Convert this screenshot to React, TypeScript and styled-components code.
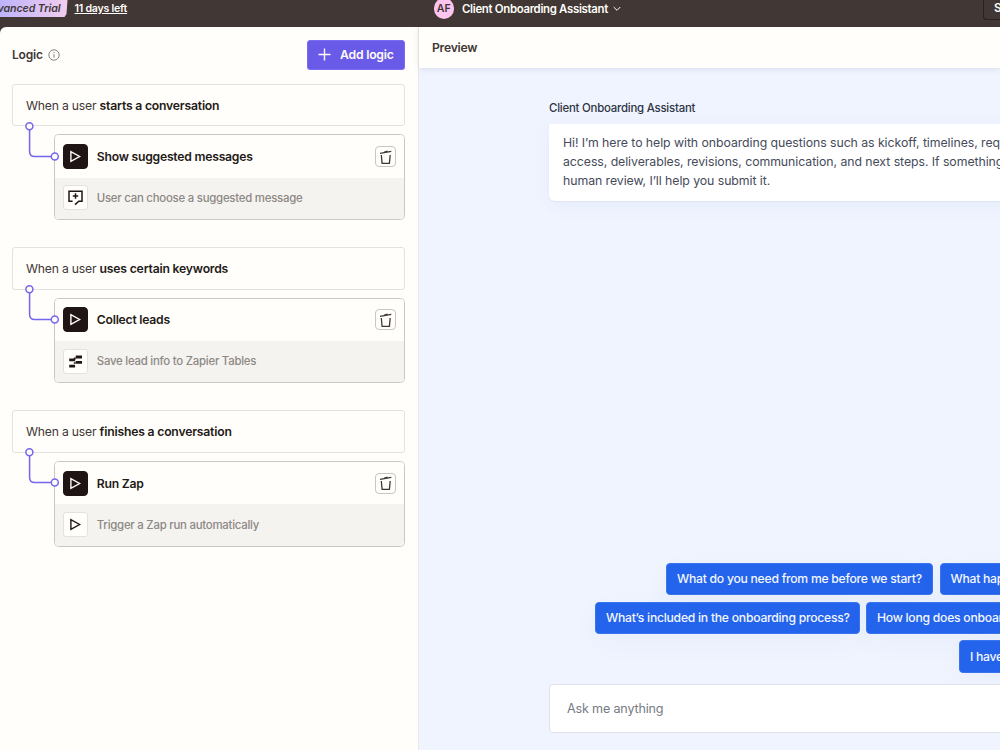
import React from "react";
import styled, { createGlobalStyle } from "styled-components";

const Global = createGlobalStyle`
  * { box-sizing: border-box; }
  html, body, #root { height: 100%; }
  body { margin: 0; overflow: hidden; background: #413735; font-family: Inter, sans-serif; color: #413735; }
  button { font-family: inherit; }
`;

const Page = styled.div`
  width: 1000px;
  height: 750px;
  display: flex;
  flex-direction: column;
  overflow: hidden;
`;

const TopBar = styled.header`
  height: 27px;
  flex: none;
  display: flex;
  align-items: flex-start;
  justify-content: space-between;
  background: #413735;
  color: #fffdf9;
  overflow: hidden;
`;

const TrialGroup = styled.div`
  display: flex;
  width: 433.5px;
  gap: 7px;
`;

const TrialTag = styled.div`
  width: 67.5px;
  height: 17px;
  display: flex;
  justify-content: flex-end;
  padding-right: 7px;
  background: linear-gradient(90deg, #bdb3fb, #f3cdee);
  clip-path: polygon(0 0, 100% 0, calc(100% - 1px) 14px, calc(100% - 3px) 100%, 0 100%);
  color: #413735;
  font: italic 600 10.6px/17px Inter, sans-serif;
  letter-spacing: -0.05px;
  white-space: nowrap;
`;

const DaysLeft = styled.a`
  font-size: 10.6px;
  line-height: 17px;
  font-weight: 600;
  text-decoration: underline;
  text-underline-offset: 1px;
  letter-spacing: -0.23px;
`;

const BotSwitcher = styled.div`
  flex: 1;
  display: flex;
  align-items: center;
  height: 17px;
  font-size: 11.4px;
  font-weight: 600;
  letter-spacing: -0.31px;
`;

const Avatar = styled.span`
  width: 20.5px;
  height: 20.5px;
  border-radius: 50%;
  background: #fcc5ef;
  color: #413735;
  font-size: 10.6px;
  letter-spacing: 0;
  display: flex;
  align-items: center;
  justify-content: center;
  margin-right: 8px;
`;

const ShareButton = styled.button`
  width: 17px;
  height: 20px;
  padding: 0 0 3px 10px;
  border: 1px solid #2b2220;
  border-width: 0 0 1.5px 1.5px;
  border-radius: 0 0 0 3px;
  background: transparent;
  color: #fffdf9;
  font-size: 11.5px;
  font-weight: 600;
  text-align: left;
  overflow: hidden;
`;

const Main = styled.main`
  flex: 1;
  display: flex;
  min-height: 0;
`;

const LogicPanel = styled.section`
  width: 419px;
  flex: none;
  background: #fffefa;
  border-right: 1px solid #ebe9e6;
  border-top-left-radius: 6px;
  padding: 13px 13.5px 0 12px;
`;

const PanelHead = styled.div`
  display: flex;
  align-items: center;
  justify-content: space-between;
  height: 30px;
  margin-bottom: 13.7px;
`;

const PanelTitle = styled.h2`
  display: flex;
  align-items: center;
  gap: 5px;
  margin: 0;
  font-size: 12px;
  line-height: 18px;
  font-weight: 600;
  letter-spacing: -0.2px;
`;

const AddButton = styled.button`
  width: 97.5px;
  height: 30px;
  display: flex;
  align-items: center;
  gap: 9px;
  padding: 0 0 1px 10px;
  border: 1px solid #7b6bf0;
  border-radius: 3px;
  background: #695be8;
  color: #fffdf9;
  font-size: 12.2px;
  font-weight: 600;
  letter-spacing: -0.2px;
  white-space: nowrap;
`;

const RuleList = styled.div`
  display: flex;
  flex-direction: column;
  gap: 27px;
`;

const Rule = styled.article`
  position: relative;
  height: 136.3px;
  display: flex;
  flex-direction: column;
  gap: 8px;
`;

const Trigger = styled.div`
  height: 42.6px;
  flex: none;
  display: flex;
  align-items: center;
  padding: 0.7px 0 0 13px;
  border: 1px solid #e4e2dc;
  border-radius: 3px;
  font-size: 12.2px;
  letter-spacing: -0.2px;
  white-space: pre;
  b { font-weight: 600; color: #241a18; }
`;

const Connector = styled.svg`
  position: absolute;
  left: 12px;
  top: 37px;
  z-index: 1;
`;

const ActionCard = styled.div`
  margin-left: 41.6px;
  flex: 1;
  border: 1px solid #cbc8c3;
  border-radius: 4.5px;
  overflow: hidden;
  display: flex;
  flex-direction: column;
`;

const ActionRow = styled.div<{ $sub?: boolean }>`
  flex: ${(p) => (p.$sub ? "1" : "0 0 42.6px")};
  display: flex;
  align-items: center;
  gap: 8.7px;
  padding: ${(p) => (p.$sub ? "0 8px 1px 8.5px" : "0 8px 0 8.5px")};
  background: ${(p) => (p.$sub ? "#f4f3f0" : "#fffefa")};
  color: ${(p) => (p.$sub ? "#8d8884" : "#241a18")};
  font-size: ${(p) => (p.$sub ? "11.4px" : "12.2px")};
  font-weight: ${(p) => (p.$sub ? 500 : 600)};
  letter-spacing: -0.24px;
`;

const IconTile = styled.span<{ $dark?: boolean }>`
  width: 25px;
  height: 25px;
  flex: none;
  display: flex;
  align-items: center;
  justify-content: center;
  border-radius: ${(p) => (p.$dark ? 4 : 3)}px;
  border: 1px solid ${(p) => (p.$dark ? "#201515" : "#e4e2dc")};
  background: ${(p) => (p.$dark ? "#201515" : "#fffefa")};
  color: ${(p) => (p.$dark ? "#fffdf9" : "#201515")};
`;

const Label = styled.span`
  flex: 1;
  white-space: nowrap;
`;

const TrashButton = styled.button`
  width: 21px;
  height: 21px;
  padding: 0;
  display: flex;
  align-items: center;
  justify-content: center;
  border: 1px solid #c9c6c1;
  border-radius: 4px;
  background: #fffefa;
  color: #413735;
`;

const PreviewPanel = styled.section`
  flex: 1;
  min-width: 0;
  display: flex;
  flex-direction: column;
  background: #eff4ff;
`;

const PreviewHead = styled.div`
  height: 41px;
  flex: none;
  padding-left: 13px;
  background: #fffefa;
  box-shadow: 0 1px 6px rgba(60, 60, 80, 0.12);
  font-size: 12.2px;
  font-weight: 600;
  line-height: 41px;
  letter-spacing: -0.26px;
`;

const Chat = styled.div`
  flex: 1;
  display: flex;
  flex-direction: column;
  padding: 32px 0 17px 130px;
  overflow: hidden;
`;

const BotName = styled.div`
  font-size: 11.4px;
  line-height: 16px;
  font-weight: 500;
  letter-spacing: -0.22px;
  color: #303544;
`;

const Bubble = styled.div`
  width: 520px;
  height: 77px;
  margin-top: 8px;
  padding: 8.9px 14px;
  border-radius: 0 6px 6px 6px;
  background: #fff;
  box-shadow: 0 4px 20px rgba(80, 80, 160, 0.05), 0 1px 2px rgba(80, 80, 160, 0.06);
  color: #454b5a;
  font-size: 12.3px;
  line-height: 19.1px;
  letter-spacing: -0.06px;
  white-space: nowrap;
`;

const Suggestions = styled.div`
  margin-top: auto;
  display: flex;
  flex-direction: column;
  gap: 6.6px;
`;

const SuggestionRow = styled.div<{ $indent: number }>`
  display: flex;
  gap: 6.5px;
  padding-left: ${(p) => p.$indent}px;
`;

const Chip = styled.button<{ $w: number }>`
  width: ${(p) => p.$w}px;
  height: 32.2px;
  flex: none;
  padding: 0 0 1px 10px;
  border: 1px solid #3a74ee;
  border-radius: 4px;
  background: #2463eb;
  color: #f3f7ff;
  font-size: 12.2px;
  font-weight: 500;
  letter-spacing: -0.265px;
  text-align: left;
  white-space: nowrap;
  box-shadow: 0 8px 28px rgba(80, 80, 160, 0.04);
`;

const Composer = styled.div`
  width: 520px;
  height: 49px;
  margin-top: 11.4px;
  padding-left: 17px;
  border: 1px solid #dfe2ea;
  border-radius: 4px;
  background: #fff;
  color: #767b85;
  font-size: 12.6px;
  line-height: 47px;
  letter-spacing: -0.18px;
`;

const PlayIcon = () => (
  <svg width="15" height="15" viewBox="0 0 15 15" fill="none" stroke="currentColor" strokeWidth="1.4">
    <path d="M2.9 2.6v9.8l8.7-4.9z" />
  </svg>
);

const SuggestIcon = () => (
  <svg width="17" height="17" viewBox="0 0 17 17" fill="none" stroke="currentColor" strokeWidth="1.5">
    <path d="M5.6 12.2H2V2.2h13v10h-3.2L8 15.6" />
    <path d="M8.5 4.3v5.4M5.8 7h5.4" />
  </svg>
);

const TablesIcon = () => (
  <svg width="15" height="15" viewBox="0 0 15 15" fill="currentColor">
    <path d="M7.7 1.6H14v2.8H7.7zM1.2 4.6h5.9v2.6H1.2zM7.7 7H14v2.8H7.7zM1.2 10.8h5.9v2.7H1.2z" />
    <path d="M5.8 3.4h1.9v2H5.8zM5.8 8.3h1.9v1.5H5.8z" />
  </svg>
);

const TrashIcon = () => (
  <svg width="15" height="16" viewBox="0 0 15 16" fill="none" stroke="currentColor" strokeWidth="1.3">
    <path d="M2 4.4l11.3-2M6.3 3.1l3.2-1" />
    <path d="M3.3 6l.8 8.4h7.3l.8-8.4" />
  </svg>
);

const InfoIcon = () => (
  <svg width="12" height="12" viewBox="0 0 12 12" fill="none" stroke="#88817e" strokeWidth="1">
    <circle cx="6" cy="6" r="5.2" />
    <path d="M6 5.2v3.5M6 3.1v1.1" />
  </svg>
);

const PlusIcon = () => (
  <svg width="13" height="13" viewBox="0 0 13 13" stroke="currentColor" strokeWidth="1.4">
    <path d="M6.5.5v12M.5 6.5h12" />
  </svg>
);

const Chevron = styled.svg`
  margin-left: 5px;
`;

const ChevronIcon = () => (
  <Chevron width="8" height="6" viewBox="0 0 8 6" fill="none" stroke="currentColor">
    <path d="M.7 1L4 4.3 7.3 1" />
  </Chevron>
);

const rules = [
  { event: "starts a conversation", action: "Show suggested messages", note: "User can choose a suggested message", icon: <SuggestIcon /> },
  { event: "uses certain keywords", action: "Collect leads", note: "Save lead info to Zapier Tables", icon: <TablesIcon /> },
  { event: "finishes a conversation", action: "Run Zap", note: "Trigger a Zap run automatically", icon: <PlayIcon /> },
];

export default function App() {
  return (
    <Page>
      <Global />
      <TopBar>
        <TrialGroup>
          <TrialTag>dvanced Trial</TrialTag>
          <DaysLeft>11 days left</DaysLeft>
        </TrialGroup>
        <BotSwitcher>
          <Avatar>AF</Avatar>
          Client Onboarding Assistant
          <ChevronIcon />
        </BotSwitcher>
        <ShareButton>S</ShareButton>
      </TopBar>
      <Main>
        <LogicPanel>
          <PanelHead>
            <PanelTitle>Logic <InfoIcon /></PanelTitle>
            <AddButton><PlusIcon />Add logic</AddButton>
          </PanelHead>
          <RuleList>
            {rules.map((r) => (
              <Rule key={r.action}>
                <Trigger>When a user <b>{r.event}</b></Trigger>
                <Connector width="36" height="42" fill="none" stroke="#7566ee" strokeWidth="1.5">
                  <path d="M5.6 9v21.5q0 5 5 5H27" />
                  <circle cx="5.4" cy="5.3" r="3.5" fill="#fffefa" />
                  <circle cx="30.8" cy="35.5" r="3.5" fill="#fffefa" />
                </Connector>
                <ActionCard>
                  <ActionRow>
                    <IconTile $dark><PlayIcon /></IconTile>
                    <Label>{r.action}</Label>
                    <TrashButton><TrashIcon /></TrashButton>
                  </ActionRow>
                  <ActionRow $sub>
                    <IconTile>{r.icon}</IconTile>
                    <Label>{r.note}</Label>
                  </ActionRow>
                </ActionCard>
              </Rule>
            ))}
          </RuleList>
        </LogicPanel>
        <PreviewPanel>
          <PreviewHead>Preview</PreviewHead>
          <Chat>
            <BotName>Client Onboarding Assistant</BotName>
            <Bubble>
              Hi! I’m here to help with onboarding questions such as kickoff, timelines, req<br />
              access, deliverables, revisions, communication, and next steps. If something<br />
              human review, I’ll help you submit it.
            </Bubble>
            <Suggestions>
              <SuggestionRow $indent={117}>
                <Chip $w={267}>What do you need from me before we start?</Chip>
                <Chip $w={120}>What hap</Chip>
              </SuggestionRow>
              <SuggestionRow $indent={46}>
                <Chip $w={264.5}>What’s included in the onboarding process?</Chip>
                <Chip $w={200}>How long does onboar</Chip>
              </SuggestionRow>
              <SuggestionRow $indent={410}>
                <Chip $w={120}>I have</Chip>
              </SuggestionRow>
            </Suggestions>
            <Composer>Ask me anything</Composer>
          </Chat>
        </PreviewPanel>
      </Main>
    </Page>
  );
}
